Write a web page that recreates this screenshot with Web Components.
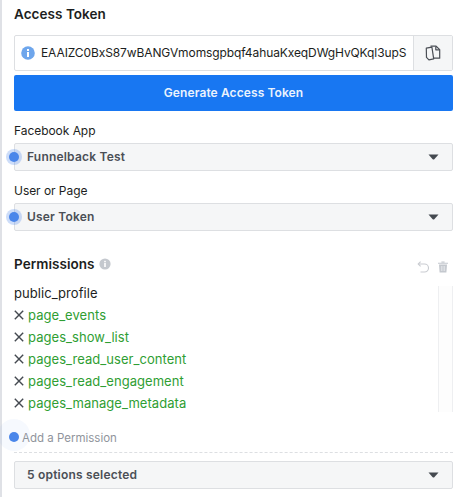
<!DOCTYPE html>
<html><head><meta charset="utf-8"><style>
html,body{margin:0;background:#fff;overflow:hidden}
body{font-family:Inter,"Liberation Sans",sans-serif;color:#1c1e21;height:497px}
</style></head><body>
<explorer-panel>
  <panel-title style="height:28px">Access Token</panel-title>
  <token-field value="EAAIZC0BxS87wBANGVmomsgpbqf4ahuaKxeqDWgHvQKql3upS"></token-field>
  <primary-button>Generate Access Token</primary-button>
  <select-field label="Facebook App" value="Funnelback Test" dot></select-field>
  <select-field label="User or Page" value="User Token" dot></select-field>
  <permissions-head>Permissions</permissions-head>
  <permission-list>
    <permission-item fixed>public_profile</permission-item>
    <permission-item>page_events</permission-item>
    <permission-item>pages_show_list</permission-item>
    <permission-item>pages_read_user_content</permission-item>
    <permission-item>pages_read_engagement</permission-item>
    <permission-item>pages_manage_metadata</permission-item>
  </permission-list>
  <add-permission>Add a Permission</add-permission>
  <select-field value="5 options selected" compact></select-field>
</explorer-panel>
<script>
function def(name, css, html){
  customElements.define(name, class extends HTMLElement{
    connectedCallback(){
      if(this.shadowRoot) return;
      const r=this.attachShadow({mode:'open'});
      r.innerHTML='<style>'+css+'</style>'+(typeof html==='function'?html(this):html);
    }
  });
}
const esc=s=>(s||'').replace(/&/g,'&amp;').replace(/</g,'&lt;');
const caret='<svg width="11" height="6" viewBox="0 0 11 6"><path d="M.5.4h10L6.3 5.2q-.8.7-1.6 0z" fill="#444950"/></svg>';

def('explorer-panel',`:host{display:block;box-sizing:border-box;width:464px;height:497px;border-left:2px solid #dfe1e6;padding:0 11px 0 12px;position:relative}
  .c{display:flex;flex-direction:column}`,'<div class="c"><slot></slot></div>');

def('panel-title',`:host{display:flex;align-items:center;font:600 13.5px/16px Inter,sans-serif;color:#1c1e21;letter-spacing:.05px}`,'<slot></slot>');

def('token-field',`:host{display:flex;box-sizing:border-box;height:36px;margin-top:7px;border:1px solid #dddfe2;background:#fff;border-radius:2px}
  .i{display:flex;align-items:center;flex:1;min-width:0;padding-left:6px;gap:6px;font:400 12px/16px Inter,sans-serif;color:#1c1e21;white-space:nowrap;overflow:hidden;letter-spacing:-.1px}
  .b{width:38px;flex:none;background:#f5f6f7;border-left:1px solid #dddfe2;display:flex;align-items:center;justify-content:center}
  svg{flex:none}`,
  e=>`<div class="i"><svg width="14" height="14" viewBox="0 0 14 14"><circle cx="7" cy="7" r="6.8" fill="#6ea6ec"/><rect x="6" y="6" width="2" height="5" fill="#fff"/><rect x="6" y="3" width="2" height="2" fill="#fff"/></svg><span>${esc(e.getAttribute('value'))}</span></div>
  <div class="b"><svg width="18" height="18" viewBox="0 0 18 18" fill="none" stroke="#4b4f56" stroke-width="1.2" stroke-linejoin="round"><path d="M6.5 2.2h5.6l3.6 3.4v8.6H9.6"/><path d="M11.8 2.4v3.4h3.7"/><path d="M2.3 4.2l5.6-1 1.8 11.6-4.8 1-2.4-2.4z" fill="#f5f6f7"/></svg></div>`);

def('primary-button',`:host{display:flex;align-items:center;justify-content:center;height:36px;margin-top:4px;background:#1877f2;border-radius:2px;color:#eaf2fd;font:600 12px/16px Inter,sans-serif;letter-spacing:.1px}`,'<slot></slot>');

def('select-field',`:host{display:block;position:relative;margin-top:12px}
  :host([compact]){margin-top:8px}
  .l{font:400 12px/16px Inter,sans-serif;color:#1c1e21;height:20px;letter-spacing:-.05px}
  .s{box-sizing:border-box;height:28px;border:1px solid #dddfe2;border-radius:2px;background:#f5f6f7;display:flex;align-items:center;justify-content:space-between;padding:0 13px 0 12px;font:600 12px/16px Inter,sans-serif;color:#4b4f56;letter-spacing:.2px}
  .d{position:absolute;left:-5px;bottom:9px;width:10px;height:10px;border-radius:50%;background:#4a86ea;box-shadow:0 0 0 3px rgba(74,134,234,.28)}`,
  e=>{const l=e.getAttribute('label');return (l?`<div class="l">${esc(l)}</div>`:'')+`<div class="s"><span>${esc(e.getAttribute('value'))}</span>${caret}</div>`+(e.hasAttribute('dot')?'<div class="d"></div>':'')});

def('permissions-head',`:host{display:flex;align-items:center;height:20px;margin-top:23px;font:600 13.5px/16px Inter,sans-serif;color:#1c1e21;letter-spacing:.05px}
  .g{margin-left:4px;flex:none}.r{margin-left:auto;margin-right:5px;display:flex;gap:9px;align-items:center;position:relative;top:3px}`,
  `<slot></slot><svg class="g" width="12" height="12" viewBox="0 0 12 12"><circle cx="6" cy="6" r="5.6" fill="#c4c8ce"/><rect x="5.2" y="5" width="1.6" height="4" fill="#fff"/><rect x="5.2" y="2.8" width="1.6" height="1.5" fill="#fff"/></svg>
  <span class="r"><svg width="12" height="12" viewBox="0 0 12 12" fill="none" stroke="#c9ccd1" stroke-width="1.1"><path d="M1.2 3h6.3a3.9 3.9 0 0 1 0 8H3.5"/><path d="M3.6.6L1.2 3l2.4 2.4"/></svg><svg width="10" height="12" viewBox="0 0 10 12"><path d="M0 1.8h10v1H0zM3.4.4h3.2v1.2H3.4zM1 3.6h8l-.6 8H1.6z" fill="#c4c8ce"/><path d="M3.4 5v5M5 5v5M6.6 5v5" stroke="#eceef0" stroke-width=".7"/></svg></span>`);

def('permission-list',`:host{display:block;position:relative;height:130px;margin-top:8px}
  .t{position:absolute;right:0;top:4px;bottom:0;width:15px;box-sizing:border-box;border:solid #eeeff1;border-width:0 1px;background:#fdfdfd}`,'<div class="t"></div><slot></slot>');

def('permission-item',`:host{display:flex;align-items:center;height:22px;position:relative;font:400 13px/16px Inter,sans-serif;color:#2f9e33;letter-spacing:.05px}
  :host([fixed]){color:#1c1e21}
  svg{flex:none;margin-right:4px}`,
  e=>(e.hasAttribute('fixed')?'':'<svg width="10" height="10" viewBox="0 0 10 10" stroke="#444950" stroke-width="1.4" fill="none"><path d="M.8.8l8.4 8.4M9.2.8L.8 9.2"/></svg>')+'<slot></slot>');

def('add-permission',`:host{display:flex;align-items:center;position:relative;box-sizing:border-box;height:41px;padding:12px 0 0 8px;border-bottom:1px dashed #dddfe2;font:400 11.5px/16px Inter,sans-serif;color:#90949c}
  .h{position:absolute;left:-16px;top:7px;width:32px;height:32px;border-radius:50%;background:rgba(74,134,234,.05)}
  .d{position:absolute;left:-5px;top:20px;width:10px;height:10px;border-radius:50%;background:#4a86ea}
  span{position:relative}`,
  '<div class="h"></div><div class="d"></div><span><slot></slot></span>');
</script>
</body></html>
